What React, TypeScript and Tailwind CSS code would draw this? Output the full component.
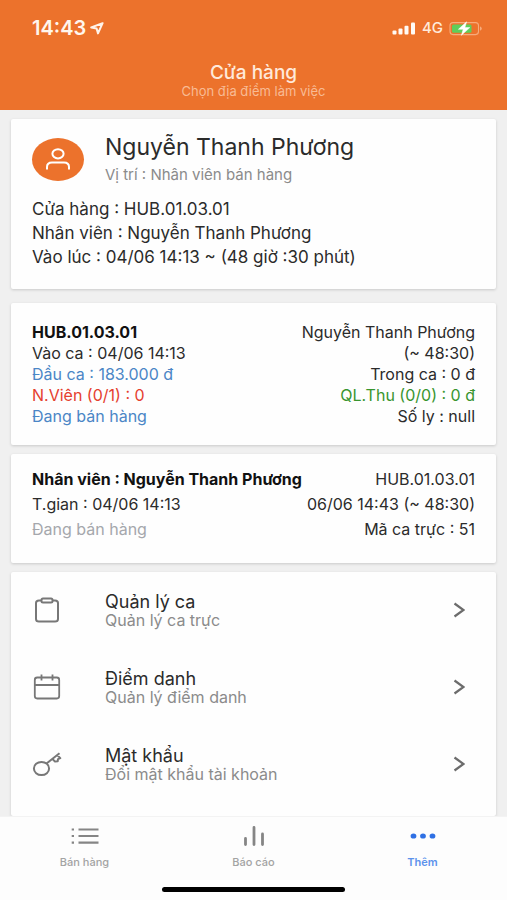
import type { ReactNode } from "react";

function LocationArrow() {
  return (
    <svg width="14" height="13" viewBox="0 0 14 13" fill="none" stroke="#fff3ea" strokeWidth="2" strokeLinejoin="round" aria-hidden="true">
      <path d="M12.6 1.2 1.2 5.4 6.6 6.4 8 11.4Z" />
    </svg>
  );
}

function SignalBars() {
  return (
    <svg width="24" height="13" viewBox="0 0 24 13" fill="#fffaf5" aria-hidden="true">
      <rect x="0.5" y="8.5" width="4" height="4" rx="1" />
      <rect x="6.5" y="6.5" width="4" height="6" rx="1" />
      <rect x="12.5" y="3.8" width="4" height="8.7" rx="1" />
      <rect x="19" y="0.5" width="4" height="12" rx="1" />
    </svg>
  );
}

function Battery() {
  return (
    <svg width="34" height="15" viewBox="0 0 34 15" aria-hidden="true">
      <rect x="1" y="1.6" width="28.5" height="12" rx="3" fill="none" stroke="#f6ab7c" strokeWidth="1.1" />
      <rect x="3" y="3.4" width="19.5" height="8.4" rx="1.6" fill="#5fce5b" />
      <path d="M31 5.4v4.4c1-.4 1.8-1.2 1.8-2.2S32 5.8 31 5.4Z" fill="#f6ab7c" />
      <path d="M17.6.8 9.4 8.3h4.8l-1.8 6 8.4-7.7h-4.9Z" fill="#fff" stroke="#fff" strokeWidth="0.5" />
    </svg>
  );
}

function PersonIcon() {
  return (
    <svg width="24" height="22" viewBox="0 0 24 22" fill="none" stroke="#fff" strokeWidth="2" aria-hidden="true">
      <ellipse cx="12" cy="5.8" rx="5.6" ry="4.6" />
      <path d="M1 21.5V19c0-2.800 2-4.500 5-4.500h12c3 0 5 1.700 5 4.500v2.500" />
    </svg>
  );
}

function ClipboardIcon() {
  return (
    <svg width="30" height="26" viewBox="0 0 30 26" fill="none" stroke="#777" strokeWidth="2" strokeLinejoin="round" aria-hidden="true">
      <path d="M9.5 3.5H7Q4 3.5 4 6v16Q4 24.5 7 24.5h16q3 0 3-2.500V6Q26 3.500 23 3.500h-2.500" />
      <rect x="9.5" y="1.5" width="11" height="4" rx="1.5" />
    </svg>
  );
}

function CalendarIcon() {
  return (
    <svg width="30" height="26" viewBox="0 0 30 26" fill="none" stroke="#777" strokeWidth="1.8" aria-hidden="true">
      <rect x="2.8" y="3.5" width="24.4" height="21" rx="2.4" />
      <path d="M3 11h24M9.5.5v6M20.5.5v6" />
    </svg>
  );
}

function KeyIcon() {
  return (
    <svg width="30" height="26" viewBox="0 0 30 26" fill="none" stroke="#777" strokeWidth="2" strokeLinejoin="round" aria-hidden="true">
      <ellipse cx="9.5" cy="17.5" rx="7.6" ry="6.6" />
      <path d="M14.5 12.5 27.5 2.2M20.5 8l2.5 2.600 2.700-.300.300-2.200 2.300-1-2.900-2.900" />
    </svg>
  );
}

function ChevronIcon() {
  return (
    <svg width="12" height="16" viewBox="0 0 12 16" fill="none" stroke="#6c6c6c" strokeWidth="2.2" aria-hidden="true">
      <path d="m1.5 1.5 9 6.5-9 6.5" />
    </svg>
  );
}

function ListIcon() {
  return (
    <svg width="28" height="20" viewBox="0 0 28 20" fill="none" stroke="#858585" strokeWidth="2.2" aria-hidden="true">
      <path d="M7.5 3.5h20M7.5 10h20M7.5 16.7h20" />
      <path d="M.7 3.5H3M.7 10H3M.7 16.7H3" />
    </svg>
  );
}

function ChartIcon() {
  return (
    <svg width="28" height="20" viewBox="0 0 28 20" fill="none" stroke="#858585" strokeWidth="2.8" strokeLinecap="round" aria-hidden="true">
      <path d="M5.5 12.5v6M14 1.5v17M22.5 8v10.5" />
    </svg>
  );
}

function DotsIcon() {
  return (
    <svg width="28" height="20" viewBox="0 0 28 20" fill="#2f70e4" aria-hidden="true">
      <ellipse cx="4.5" cy="10" rx="2.9" ry="2.6" />
      <ellipse cx="14" cy="10" rx="2.9" ry="2.6" />
      <ellipse cx="23.5" cy="10" rx="2.9" ry="2.6" />
    </svg>
  );
}

function Card({ className, children }: { className: string; children: ReactNode }) {
  return (
    <section className={`rounded-xs bg-[#fefefe] shadow-[0_1px_3px_rgba(0,0,0,0.16)] ${className}`}>{children}</section>
  );
}

const menu = [
  { title: "Quản lý ca", note: "Quản lý ca trực", icon: <ClipboardIcon /> },
  { title: "Điểm danh", note: "Quản lý điểm danh", icon: <CalendarIcon /> },
  { title: "Mật khẩu", note: "Đổi mật khẩu tài khoản", icon: <KeyIcon /> },
];

const tabs = [
  { label: "Bán hàng", icon: <ListIcon />, active: false },
  { label: "Báo cáo", icon: <ChartIcon />, active: false },
  { label: "Thêm", icon: <DotsIcon />, active: true },
];

export default function App() {
  return (
    <div className="flex min-h-screen flex-col bg-[#f0f0f0] font-['Inter','Noto_Sans',sans-serif] text-base text-[#2b2b2b]">
      <header className="bg-[#ec722c] pb-3">
        <div className="flex items-center justify-between pt-4 pr-6 pl-8">
          <div className="flex items-center gap-1 text-xl leading-6 font-semibold text-[#fff6ee]">
            <span>14:43</span>
            <LocationArrow />
          </div>
          <div className="flex items-center gap-1">
            <SignalBars />
            <span className="px-0.5 text-[15px] leading-6 font-medium text-[#ffeadb]">4G</span>
            <Battery />
          </div>
        </div>
        <div className="pt-[22px] text-center">
          <h1 className="text-[19px] leading-[22px] font-medium text-[#ffe9da]">Cửa hàng</h1>
          <p className="text-[13px] leading-[14px] text-[#f8bb94]">Chọn địa điểm làm việc</p>
        </div>
      </header>

      <main className="flex grow flex-col px-[11px] pt-[9px]">
        <Card className="px-[21px] pt-[14px] pb-5">
          <div className="flex items-center">
            <div className="flex h-[43px] w-[52px] items-center justify-center rounded-[50%] bg-[#ec722c]">
              <PersonIcon />
            </div>
            <div className="pl-[21px]">
              <h2 className="text-[23px] leading-7">Nguyễn Thanh Phương</h2>
              <p className="pt-1 text-[15px] leading-5 text-[#8b8b8b]">Vị trí : Nhân viên bán hàng</p>
            </div>
          </div>
          <div className="pt-3 text-[17px] leading-6">
            <p>Cửa hàng : HUB.01.03.01</p>
            <p>Nhân viên : Nguyễn Thanh Phương</p>
            <p>Vào lúc : 04/06 14:13 ~ (48 giờ :30 phút)</p>
          </div>
        </Card>

        <Card className="mt-[14px] flex justify-between px-[21px] pt-[19px] pb-[18px] text-base leading-[21px]">
          <div>
            <h3 className="font-bold text-[#111]">HUB.01.03.01</h3>
            <p>Vào ca : 04/06 14:13</p>
            <p className="text-[#4b86c6]">Đầu ca : 183.000 đ</p>
            <p className="text-[#e5402f]">N.Viên (0/1) : 0</p>
            <p className="text-[#4b86c6]">Đang bán hàng</p>
          </div>
          <div className="text-right">
            <p>Nguyễn Thanh Phương</p>
            <p>(~ 48:30)</p>
            <p>Trong ca : 0 đ</p>
            <p className="text-[#38952f]">QL.Thu (0/0) : 0 đ</p>
            <p>Số ly : null</p>
          </div>
        </Card>

        <Card className="mt-[9px] flex justify-between px-[21px] pt-[13px] pb-[21px] text-base leading-[25px]">
          <div>
            <h3 className="font-bold text-[#111]">Nhân viên : Nguyễn Thanh Phương</h3>
            <p>T.gian : 04/06 14:13</p>
            <p className="text-[#a5a7ac]">Đang bán hàng</p>
          </div>
          <div className="text-right">
            <p>HUB.01.03.01</p>
            <p>06/06 14:43 (~ 48:30)</p>
            <p>Mã ca trực : 51</p>
          </div>
        </Card>

        <Card className="mt-[9px] grow">
          {menu.map((item) => (
            <button key={item.title} type="button" className="flex w-full items-center pt-5 pr-[31px] pb-[21px] pl-[21px] text-left">
              {item.icon}
              <span className="grow pl-[43px]">
                <span className="block text-lg leading-5">{item.title}</span>
                <span className="block text-base leading-4 text-[#8b8b8b]">{item.note}</span>
              </span>
              <ChevronIcon />
            </button>
          ))}
        </Card>
      </main>

      <footer className="border-t border-[#f3f3f3] bg-[#fdfdfd] pb-2">
        <nav className="grid grid-cols-3 pt-[9px] pb-[17px]">
          {tabs.map((tab) => (
            <button
              key={tab.label}
              type="button"
              aria-current={tab.active ? "page" : undefined}
              className={`flex flex-col items-center gap-2 text-[11px] leading-4 ${tab.active ? "font-semibold text-[#5c92ec]" : "font-medium text-[#a3a3a3]"}`}
            >
              {tab.icon}
              {tab.label}
            </button>
          ))}
        </nav>
        <div className="mx-auto h-[5px] w-[36%] rounded-full bg-black" />
      </footer>
    </div>
  );
}
